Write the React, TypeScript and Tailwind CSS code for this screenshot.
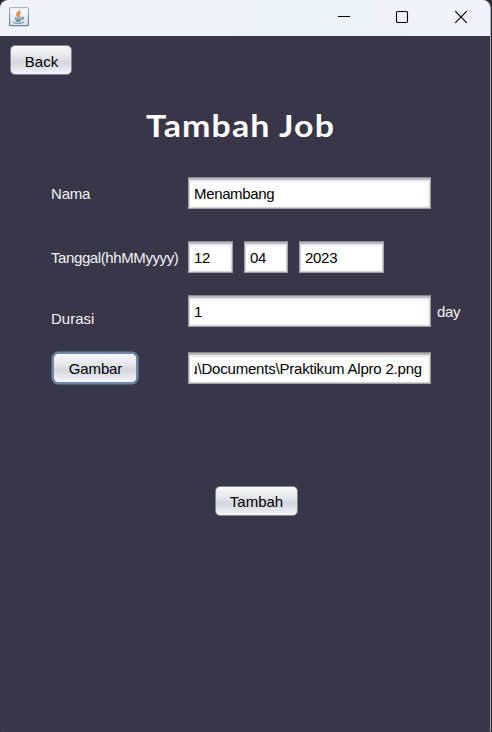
import type { ReactNode } from "react";

function JavaIcon() {
  return (
    <svg width="20" height="20" viewBox="0 0 20 20" fill="none">
      <defs>
        <linearGradient id="tile" x1="0" y1="0" x2="0" y2="1">
          <stop offset="0" stopColor="#ffffff" />
          <stop offset="1" stopColor="#dde2e7" />
        </linearGradient>
        <linearGradient id="edge" x1="0" y1="0" x2="0" y2="1">
          <stop offset="0" stopColor="#a5b7c5" />
          <stop offset="1" stopColor="#4b6b87" />
        </linearGradient>
      </defs>
      <rect x="0.6" y="0.6" width="18.8" height="18.2" rx="1.2" fill="url(#tile)" stroke="url(#edge)" strokeWidth="1.1" />
      <path d="M10.7 3.2C11 5 7.5 5.7 7.8 7.5c.1 1 1.2 1.4 1.5 2.4M11.7 5.6C9.7 6.4 9.3 7.2 10.1 8.2c.5.7.4 1.2-.1 1.9" stroke="#e8833a" strokeWidth="1.5" />
      <path d="M5.6 10.5c1.8.6 5.3.6 7.2 0M6.2 12.4c1.8.6 4.6.6 6.2 0M6.8 13.9c1.5.5 3.7.5 5 0M13 10.4c2-.6 2.2 1.6-.3 2.2" stroke="#6789a4" strokeWidth="1.3" />
      <path d="M4 15.5c2.2 1.1 8.5 1 11-.2" stroke="#6789a4" strokeWidth="1.2" />
    </svg>
  );
}

function Button({ children, className = "" }: { children: ReactNode; className?: string }) {
  return (
    <button
      className={`flex h-[30px] items-center justify-center rounded-[5px] border border-[#858491] bg-[linear-gradient(#f8f9fb_0%,#e6e8ec_35%,#d5d7df_58%,#e2e5ec_78%,#f3f6fb_100%)] text-[15px] leading-[17px] text-black ${className}`}
    >
      {children}
    </button>
  );
}

function Field({ children, className = "" }: { children: ReactNode; className?: string }) {
  return (
    <div
      className={`flex h-8 shrink-0 items-center overflow-hidden whitespace-nowrap border border-[#a0a0a8] border-t-[#85858b] bg-white pl-[5px] text-[15px] leading-[17px] text-black shadow-[inset_0_2px_1px_#b9b9bc,inset_0_4px_2px_#ededee,inset_1px_-1px_1px_#cfcfd2,inset_-1px_0_1px_#cfcfd2] ${className}`}
    >
      {children}
    </div>
  );
}

export default function App() {
  return (
    <div className="h-[732px] w-[492px] bg-[#292929] pr-px font-['Liberation_Sans',Arial,sans-serif]">
      <div className="flex h-[732px] flex-col overflow-hidden rounded-t-[8px] rounded-b-[2px] border-r border-[#a9a9ae] bg-[#39364a]">
        <header className="flex h-9 shrink-0 items-center bg-[linear-gradient(90deg,#f0f3fa_0%,#eff3fa_40%,#edf3f7_65%,#f0f3fb_100%)] pl-[9px] pr-[22px]">
          <div className="-mt-[3px]"><JavaIcon /></div>
          <div className="-mt-[2px] ml-auto flex items-center gap-[45px] text-black">
            <svg width="14" height="14" viewBox="0 0 14 14"><path d="M2 6.5h12" stroke="currentColor" /></svg>
            <svg width="14" height="14" viewBox="0 0 14 14" fill="none"><rect x="1.5" y="1.5" width="11" height="11" rx="1.2" stroke="currentColor" strokeWidth="1.1" /></svg>
            <svg width="14" height="14" viewBox="0 0 14 14"><path d="M1.2 1.2 12.8 12.8M12.8 1.2 1.2 12.8" stroke="currentColor" strokeWidth="1.15" /></svg>
          </div>
        </header>
        <main className="flex flex-col items-start">
          <Button className="ml-[10px] mt-[9px] w-[62px] pl-px pt-[2px]">Back</Button>
          <h1 className="ml-[146px] mt-[31px] origin-left scale-x-[1.13] whitespace-nowrap font-['Lato',sans-serif] text-[30px] font-bold leading-[38px] tracking-[1px] text-white">Tambah Job</h1>
          <div className="mt-[33px] flex items-center pl-[51px] text-[15px] leading-[17px] text-[#f2f2f4]">
            <label className="w-[137px] tracking-[-0.2px]">Nama</label>
            <Field className="w-[243px] tracking-[-0.35px]">Menambang</Field>
          </div>
          <div className="mt-[32px] flex items-center pl-[51px] text-[15px] leading-[17px] text-[#f2f2f4]">
            <label className="w-[137px] tracking-[-0.4px]">Tanggal(hhMMyyyy)</label>
            <Field className="w-[45px] tracking-[-0.3px]">12</Field>
            <Field className="ml-[11px] w-[44px] tracking-[-0.3px]">04</Field>
            <Field className="ml-[11px] w-[85px] tracking-[-0.3px]">2023</Field>
          </div>
          <div className="mt-[22px] flex items-center pl-[51px] text-[15px] leading-[17px] text-[#f2f2f4]">
            <label className="w-[137px] pt-[15px]">Durasi</label>
            <Field className="w-[243px]">1</Field>
            <span className="ml-[6px] tracking-[-0.3px]">day</span>
          </div>
          <div className="mt-[25px] flex items-center pl-[53px]">
            <Button className="w-[84px] pl-px tracking-[-0.15px] ring-[1.5px] ring-[#648bb5]">Gambar</Button>
            <Field className="ml-[51px] w-[243px] pr-2 tracking-[-0.2px]">
              <span className="flex min-w-0 flex-1 justify-end overflow-hidden">u\Documents\Praktikum Alpro 2.png</span>
            </Field>
          </div>
          <Button className="ml-[215px] mt-[102px] w-[83px]">Tambah</Button>
        </main>
      </div>
    </div>
  );
}
